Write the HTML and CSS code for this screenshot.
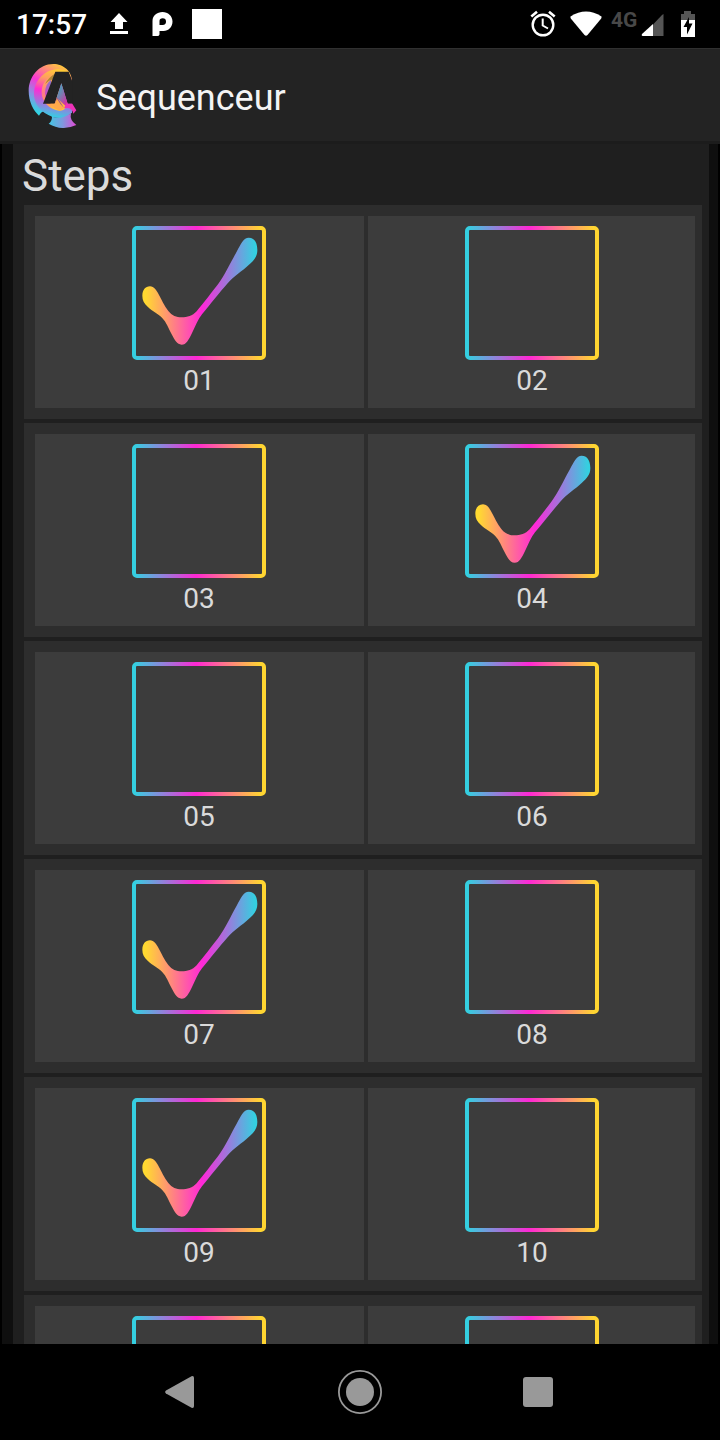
FILE: index.html
```html
<!DOCTYPE html>
<html lang="fr">
<head>
<meta charset="utf-8">
<title>Sequenceur</title>
<link rel="stylesheet" href="styles.css">
</head>
<body>
<svg class="defs" width="0" height="0" aria-hidden="true">
  <defs>
    <linearGradient id="frame-g" gradientUnits="userSpaceOnUse" x1="36" y1="0" x2="438" y2="0">
      <stop offset="0.02" stop-color="#34cfe0"/><stop offset="0.48" stop-color="#ff27d4"/><stop offset="0.96" stop-color="#ffd531"/>
    </linearGradient>
    <linearGradient id="check-g" gradientUnits="userSpaceOnUse" x1="67" y1="0" x2="412" y2="0">
      <stop offset="0.03" stop-color="#ffd931"/><stop offset="0.52" stop-color="#ff27d8"/><stop offset="0.98" stop-color="#34d0e0"/>
    </linearGradient>
    <symbol id="box" viewBox="36 33 402 402">
      <rect x="42" y="39" width="390" height="390" rx="9" fill="none" stroke="url(#frame-g)" stroke-width="12"/>
    </symbol>
    <symbol id="checked" viewBox="36 33 402 402">
      <rect x="42" y="39" width="390" height="390" rx="9" fill="none" stroke="url(#frame-g)" stroke-width="12"/>
      <path fill="url(#check-g)" d="M67 242C67 225 76 214 90 214C102 214 109 225 117 240C124 253 133 273 145 288C156 302 169 307 185 307C202 307 217 303 230 289C250 265 276 231 294 208C314 181 332 142 350 110C363 86 371 68 386 68C402 68 412 81 412 105C412 126 401 136 386 150C367 168 341 184 323 205C300 231 271 268 246 298C234 313 226 334 215 356C206 374 199 389 185 389C171 389 164 375 155 358C146 340 139 321 126 308C114 295 98 290 83 275C72 265 67 256 67 242Z"/>
    </symbol>
  </defs>
</svg>

<header class="status">
  <span class="clock">17:57</span>
  <svg class="upload" width="20" height="24" viewBox="0 0 20 24"><path fill="#fff" d="M10 1L18.500 10H14V17H6V10H1.500ZM1 19H19V22H1Z"/></svg>
  <svg class="parking" width="22" height="26" viewBox="0 0 22 26"><path fill="#fff" fill-rule="evenodd" d="M.5 25V10C.5 4.500 5 1 10.500 1S20.500 5 20.500 10.500C20.500 16 16.500 20 11.500 20H7.500V23.500Q7 25 5.500 25ZM7.500 14V10Q7.500 7.200 10.700 7.200T14 10.500T10.700 14Z"/></svg>
  <span class="white-square"></span>
  <svg class="alarm" width="26" height="28" viewBox="0 0 26 28"><g fill="none" stroke="#fff"><circle cx="13" cy="15" r="10.300" stroke-width="2.400"/><path stroke-width="2.600" d="M1.300 6.500L7 1.800M24.700 6.500L19 1.800"/><path stroke-width="2" d="M12.700 8.500V15.500L18 18.500"/></g></svg>
  <svg class="wifi" width="32" height="26" viewBox="0 0 32 26"><path fill="#fff" d="M.5 5.500Q16-4.500 31.500 5.500Q31.700 6.800 31 7.800L17.500 24Q16 25.500 14.500 24L1 7.800Q.3 6.800 .5 5.500Z"/></svg>
  <span class="network">4G</span>
  <svg class="signal" width="23" height="24" viewBox="0 0 23 24"><path fill="#555" d="M22.500 1V23H12V11.500L21 2Z"/><path fill="#fff" d="M12 11V23H1.500Q0 22.500 1 21Z"/></svg>
  <svg class="battery" width="16" height="26" viewBox="0 0 16 26"><path fill="#555" d="M4 0H11V3H15V9H1V3H4Z"/><path fill="#fff" d="M1 9H15V26H1Z"/><path fill="#000" d="M9 6L3.500 16H7V23.500L12.500 12.500H9Z"/></svg>
</header>

<div class="toolbar">
  <svg class="logo" width="55" height="70" viewBox="0 0 165 210">
    <defs>
      <linearGradient id="outer" x1="0.700" y1="0" x2="0.300" y2="1"><stop offset="0" stop-color="#ffc83a"/><stop offset=".2" stop-color="#ff8580"/><stop offset=".42" stop-color="#f936d5"/><stop offset=".68" stop-color="#8c8fe2"/><stop offset=".95" stop-color="#30d5e3"/></linearGradient>
      <linearGradient id="mid" x1="0.700" y1="0" x2="0.550" y2="1"><stop offset="0" stop-color="#ffd12f"/><stop offset=".22" stop-color="#ff9e60"/><stop offset=".48" stop-color="#ff2bd2"/><stop offset=".75" stop-color="#9d78dd"/><stop offset="1" stop-color="#2ed4e3"/></linearGradient>
      <linearGradient id="inner" x1="0.400" y1="0" x2="0.600" y2="1"><stop offset="0" stop-color="#ffb050"/><stop offset=".4" stop-color="#ff7a8a"/><stop offset=".75" stop-color="#ff9a55"/><stop offset="1" stop-color="#ffcd35"/></linearGradient>
      <linearGradient id="core" x1="0" y1="0" x2="0" y2="1"><stop offset="0" stop-color="#8a78c8"/><stop offset="1" stop-color="#f32fc0"/></linearGradient>
      <linearGradient id="foot" x1="0" y1="0" x2="1" y2="0"><stop offset="0" stop-color="#42c6e3"/><stop offset=".5" stop-color="#7e99dd"/><stop offset="1" stop-color="#e248d5"/></linearGradient>
      <linearGradient id="peak" x1="0" y1="0" x2=".7" y2="1"><stop offset="0" stop-color="#29b9c4"/><stop offset=".5" stop-color="#777fb0"/><stop offset="1" stop-color="#df299f"/></linearGradient>
    </defs>
    <path fill="url(#outer)" d="M141 68C143 34 115 12 85 12C41 12 11 51 11 92C11 125 25 151 42 167Q49 154 60 153C71 152 80 160 81 172L115 175L141 158V131L105 37L129 36Q137 48 141 68Z"/>
    <path fill="url(#mid)" d="M130 36C105 21 70 28 49 49C26 72 23 101 31 124C40 152 72 174 107 174C124 173 137 163 141 152L140 131L85 59L105 37Z"/>
    <path fill="url(#inner)" d="M83 48C58 56 46 82 51 108C57 134 80 150 104 152Q123 151 128 131L90 68Z"/>
    <path fill="url(#core)" d="M78 60Q60 72 60 100L66 131L78 104Z"/>
    <path fill="#b18736" d="M92 40Q73 50 60 72Q72 60 84 58Z"/>
    <path fill="#232323" d="M91 35H131L143 68V131H128L109 70L89 131H54Z"/>
    <path fill="url(#peak)" d="M109 70L128 131L126 142L95 113Z"/>
    <path fill="#9c5a90" d="M96 112L89 131L117 143Z"/>
    <path fill="#ffa94a" d="M89 131L96 116Q104 131 118 145L104 152Q87 146 76 131Z"/>
    <path fill="#ee32b8" d="M128 131H142L154 151L145 161Q142 144 126 144L117 145L124 130Z"/>
    <path fill="url(#foot)" d="M81 170Q109 180 138 160Q133 181 154 195Q132 205 113 204Q91 203 71 191Q81 184 81 170Z"/>
  </svg>
  <h1 class="title">Sequenceur</h1>
</div>

<main class="viewport">
  <section class="panel">
    <h2 class="heading">Steps</h2>
    <div class="rows">
      <div class="row">
        <div class="cell"><svg class="mark"><use href="#checked"/></svg><span class="num">01</span></div>
        <div class="cell"><svg class="mark"><use href="#box"/></svg><span class="num">02</span></div>
      </div>
      <div class="row">
        <div class="cell"><svg class="mark"><use href="#box"/></svg><span class="num">03</span></div>
        <div class="cell"><svg class="mark"><use href="#checked"/></svg><span class="num">04</span></div>
      </div>
      <div class="row">
        <div class="cell"><svg class="mark"><use href="#box"/></svg><span class="num">05</span></div>
        <div class="cell"><svg class="mark"><use href="#box"/></svg><span class="num">06</span></div>
      </div>
      <div class="row">
        <div class="cell"><svg class="mark"><use href="#checked"/></svg><span class="num">07</span></div>
        <div class="cell"><svg class="mark"><use href="#box"/></svg><span class="num">08</span></div>
      </div>
      <div class="row">
        <div class="cell"><svg class="mark"><use href="#checked"/></svg><span class="num">09</span></div>
        <div class="cell"><svg class="mark"><use href="#box"/></svg><span class="num">10</span></div>
      </div>
      <div class="row">
        <div class="cell"><svg class="mark"><use href="#box"/></svg></div>
        <div class="cell"><svg class="mark"><use href="#box"/></svg></div>
      </div>
    </div>
  </section>
</main>

<nav class="navbar">
  <svg class="back" width="30" height="34" viewBox="0 0 30 34"><path fill="#999" d="M1 15.500L26.500 1.200Q29 .5 29 3V31Q29 33.500 26.500 32.800L1 18.500Q-.7 17 1 15.500Z"/></svg>
  <svg class="home" width="44" height="44" viewBox="0 0 44 44"><circle cx="22" cy="22" r="21.100" fill="none" stroke="#999" stroke-width="1.800"/><circle cx="22" cy="22" r="14" fill="#999"/></svg>
  <span class="recent"></span>
</nav>
</body>
</html>
```

FILE: styles.css
```css
* { box-sizing: border-box; }
body {
  margin: 0;
  width: 720px;
  height: 1440px;
  overflow: hidden;
  display: flex;
  flex-direction: column;
  background: #000;
  color: #dadada;
  font-family: Roboto, "Noto Sans", sans-serif;
}
svg { display: block; flex: none; }
.defs { position: absolute; }

.status {
  flex: none;
  height: 48px;
  display: flex;
  align-items: center;
  padding: 0 24px 0 16px;
  color: #fff;
}
.clock { width: 93px; font-size: 28px; font-weight: 500; line-height: 48px; padding-top: 2px; }
.parking { margin-left: 23px; }
.white-square { width: 30px; height: 30px; margin-left: 18px; background: #fff; }
.alarm { margin-left: auto; }
.wifi { margin-left: 14px; }
.network { width: 28px; margin: -8px 0 0 9px; font-size: 21px; font-weight: 700; color: #484848; }
.signal { margin-left: 2px; margin-top: 2px; }
.battery { margin-left: 16px; }

.toolbar {
  flex: none;
  height: 96px;
  display: flex;
  align-items: center;
  padding: 0 0 0 25px;
  background: #232323;
  border-top: 1px solid #303030;
  border-bottom: 3px solid #1c1c1c;
}
.title { margin: 5px 0 0 16px; font-size: 36px; line-height: 42px; font-weight: 400; color: #f4f4f4; }

.viewport {
  flex: none;
  height: 1200px;
  overflow: hidden;
  margin: 0 2px;
  padding: 0 9px 0 11px;
  background: #0f0f0f;
}
.panel { padding: 0 7px 0 11px; background: #1f1f1f; }
.heading { height: 61px; margin: 0 0 0 -2px; font-size: 44px; line-height: 65px; font-weight: 400; }
.rows { display: flex; flex-direction: column; gap: 4px; }
.row {
  height: 214px;
  padding: 11px 7px 11px 11px;
  display: grid;
  grid-template-columns: 329px 327px;
  gap: 4px;
  background: #2d2d2d;
}
.cell {
  display: flex;
  flex-direction: column;
  align-items: center;
  padding-top: 10px;
  background: #3c3c3c;
}
.cell:first-child { padding-right: 1px; }
.cell:last-child { padding-left: 1px; }
.mark { width: 134px; height: 134px; }
.cell:last-child .mark { margin-left: -1px; }
.num { font-size: 28px; line-height: 33px; margin-top: 4px; }

.navbar {
  flex: none;
  height: 96px;
  display: flex;
  align-items: center;
  justify-content: space-between;
  padding: 0 167px 0 165px;
}
.home { margin-left: 2px; }
.recent { width: 30px; height: 30px; border-radius: 3px; background: #999; }
```
